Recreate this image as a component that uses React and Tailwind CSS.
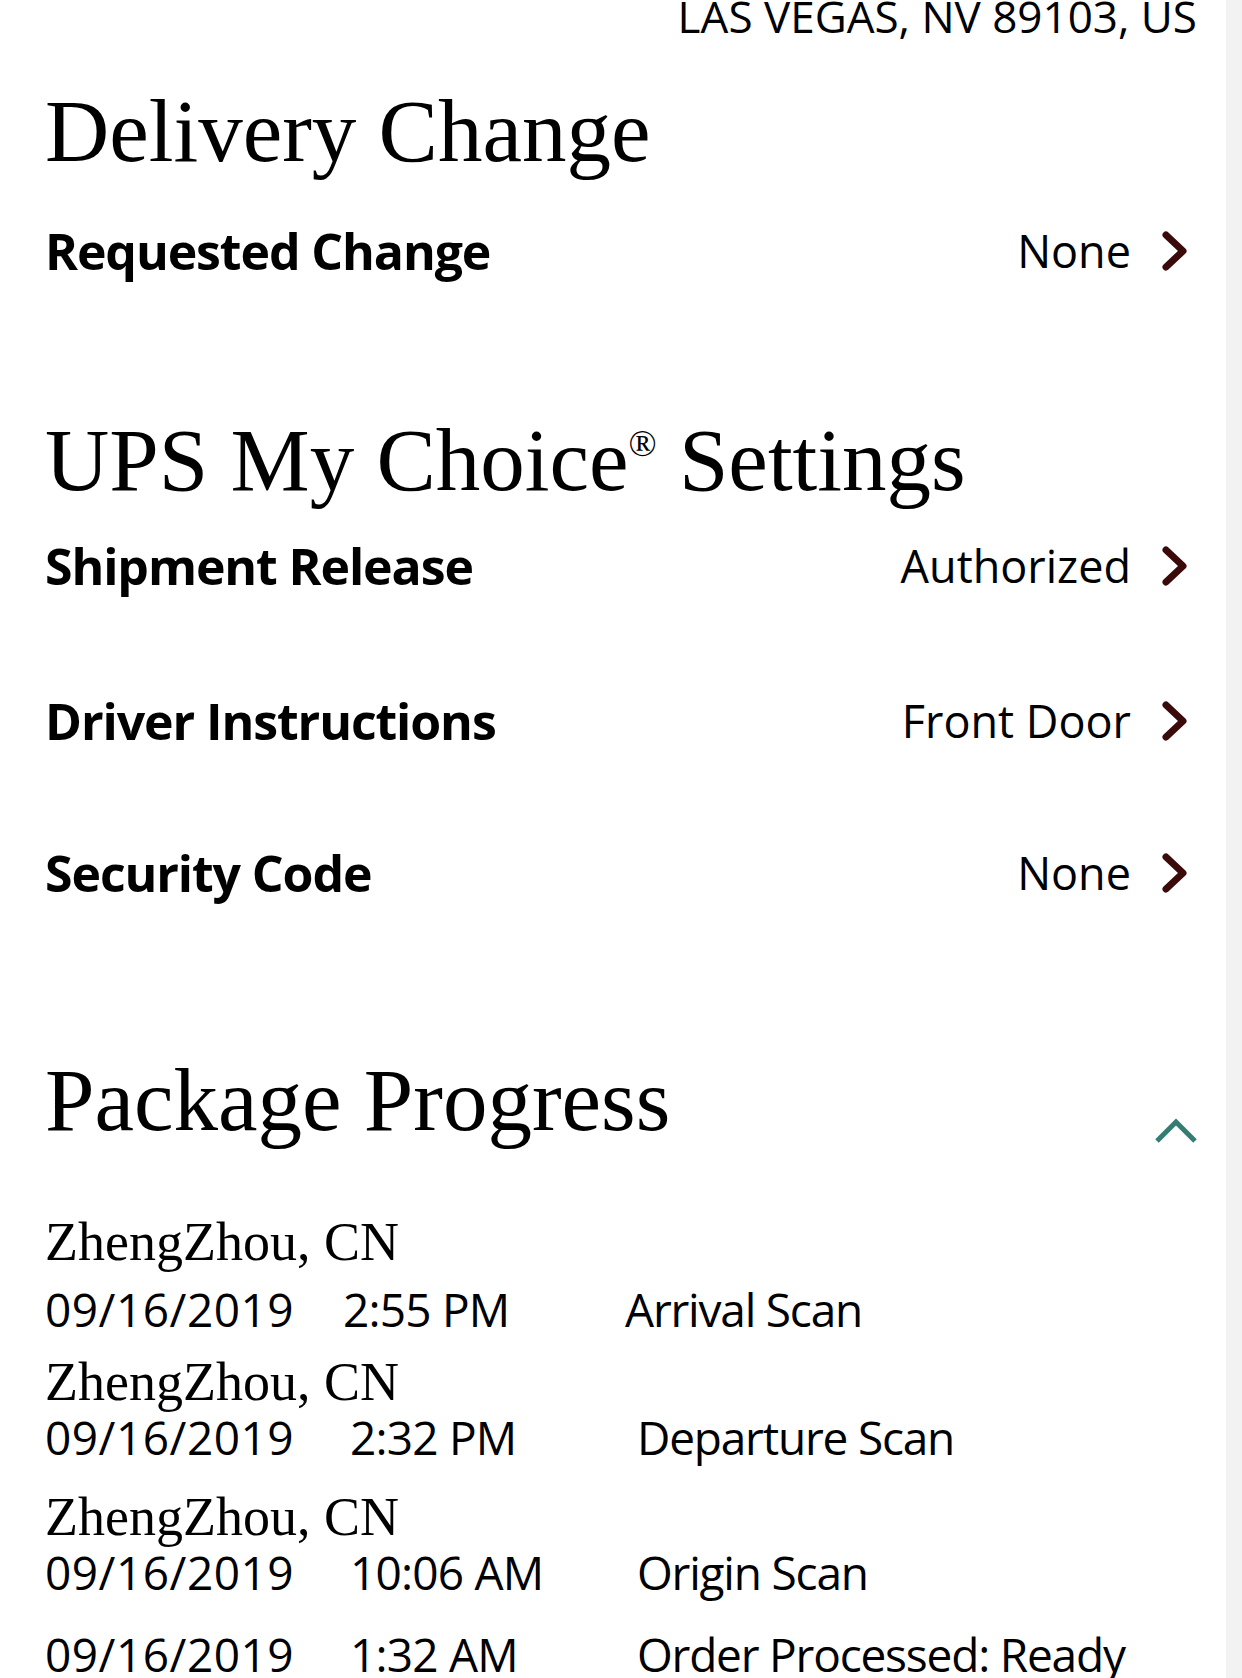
import React from "react";

const serif = "font-['Liberation_Serif',serif]";

const settings = [
  { label: "Shipment Release", value: "Authorized", mt: "mt-[36px]" },
  { label: "Driver Instructions", value: "Front Door", mt: "mt-[105px]" },
  { label: "Security Code", value: "None", mt: "mt-[102px]" },
];

const progress = [
  { city: "ZhengZhou, CN", date: "09/16/2019", time: "2:55 PM", status: "Arrival Scan", first: true, mt: "mt-[70px]", rowMt: "mt-[17px]" },
  { city: "ZhengZhou, CN", date: "09/16/2019", time: "2:32 PM", status: "Departure Scan", mt: "mt-[23px]", rowMt: "mt-[5px]" },
  { city: "ZhengZhou, CN", date: "09/16/2019", time: "10:06 AM", status: "Origin Scan", mt: "mt-[30px]", rowMt: "mt-[5px]" },
  { date: "09/16/2019", time: "1:32 AM", status: "Order Processed: Ready", rowMt: "mt-[36px]" },
];

function Chevron() {
  return (
    <svg width="32" height="42" viewBox="0 0 32 42" className="ml-[28px] shrink-0">
      <path d="M7 5 L24 21 L7 37" fill="none" stroke="#3b0a0a" strokeWidth="7" strokeLinecap="round" strokeLinejoin="round" />
    </svg>
  );
}

function SettingRow({ label, value, className }) {
  return (
    <div className={`flex items-center justify-between h-[50px] pr-[35px] ${className}`}>
      <span className="font-bold text-[50px] leading-[50px] tracking-[-1.1px]">{label}</span>
      <div className="flex items-center">
        <span className="text-[45px] leading-[50px]">{value}</span>
        <Chevron />
      </div>
    </div>
  );
}

export default function App() {
  return (
    <div className="flex h-[1678px] overflow-hidden bg-white text-black font-['Open_Sans',sans-serif]">
      <div className="w-[1226px] shrink-0 pl-[45px]">
        {/* address tail, page is scrolled */}
        <div className="text-right text-[44px] leading-[32px] pr-[29px] whitespace-nowrap">LAS VEGAS, NV 89103, US</div>

        <h2 className={`${serif} text-[89px] leading-[89px] mt-[55px]`}>Delivery Change</h2>
        <SettingRow label="Requested Change" value="None" className="mt-[50px]" />

        <h2 className={`${serif} text-[89px] leading-[89px] mt-[140px]`}>
          UPS My Choice<sup className="text-[37px] top-[-34px]">®</sup> Settings
        </h2>
        {settings.map((s) => (
          <SettingRow key={s.label} label={s.label} value={s.value} className={s.mt} />
        ))}

        <div className="flex items-end justify-between mt-[158px] pr-[27px]">
          <h2 className={`${serif} text-[89px] leading-[89px]`}>Package Progress</h2>
          <svg width="46" height="28" viewBox="0 0 46 28" className="shrink-0">
            <path d="M4 24 L23 5 L42 24" fill="none" stroke="#357d73" strokeWidth="5" strokeLinejoin="miter" />
          </svg>
        </div>

        {progress.map((p, i) => (
          <div key={i}>
            {p.city && (
              <div className={`${serif} text-[54px] leading-[54px] ${p.mt}`}>{p.city}</div>
            )}
            <div className={`flex text-[46px] leading-[46px] whitespace-nowrap ${p.rowMt}`}>
              <span className={`tracking-[0.5px] ${p.first ? "w-[298px]" : "w-[305px]"}`}>{p.date}</span>
              <span className={`tracking-[-0.8px] ${p.first ? "w-[282px]" : "w-[287px]"}`}>{p.time}</span>
              <span className="tracking-[-1.2px]">{p.status}</span>
            </div>
          </div>
        ))}
      </div>
      <div className="flex-1 bg-[#f2f2f2]" />
    </div>
  );
}
